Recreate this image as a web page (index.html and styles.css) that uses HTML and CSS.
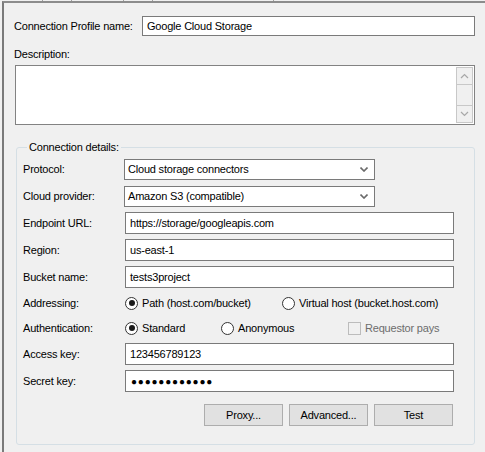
FILE: index.html
```html
<!DOCTYPE html>
<html lang="en">
<head>
    <meta charset="UTF-8">
    <title>Connection Profile</title>
    <link rel="stylesheet" href="styles.css">
</head>
<body>
    <div class="tab-ticks">
        <span class="tick t1"></span>
        <span class="tick t2"></span>
        <span class="tick t3"></span>
        <span class="tick t4"></span>
        <span class="tick t5"></span>
    </div>

    <div class="panel">
        <div class="profile-row">
            <label class="profile-label">Connection Profile name:</label>
            <div class="text-box profile-input">Google Cloud Storage</div>
        </div>

        <div class="desc-label">Description:</div>
        <div class="memo">
            <div class="memo-scroll">
                <span class="scroll-btn">
                    <svg width="9" height="6" viewBox="0 0 9 6"><path d="M1 5 L4.5 1.5 L8 5" fill="none" stroke="#a8a8a8" stroke-width="1.2"/></svg>
                </span>
                <span class="scroll-track"></span>
                <span class="scroll-btn">
                    <svg width="9" height="6" viewBox="0 0 9 6"><path d="M1 1 L4.5 4.5 L8 1" fill="none" stroke="#a8a8a8" stroke-width="1.2"/></svg>
                </span>
            </div>
        </div>

        <fieldset class="details">
            <legend>Connection details:</legend>

            <div class="row">
                <span class="row-label">Protocol:</span>
                <div class="combo">
                    <span>Cloud storage connectors</span>
                    <svg class="chevron" width="8" height="5" viewBox="0 0 8 5"><path d="M0.5 0.5 L4 4 L7.5 0.5" fill="none" stroke="#6a6a6a" stroke-width="1.6"/></svg>
                </div>
            </div>
            <div class="row">
                <span class="row-label">Cloud provider:</span>
                <div class="combo">
                    <span>Amazon S3 (compatible)</span>
                    <svg class="chevron" width="8" height="5" viewBox="0 0 8 5"><path d="M0.5 0.5 L4 4 L7.5 0.5" fill="none" stroke="#6a6a6a" stroke-width="1.6"/></svg>
                </div>
            </div>
            <div class="row">
                <span class="row-label">Endpoint URL:</span>
                <div class="text-box field">https://storage/googleapis.com</div>
            </div>
            <div class="row">
                <span class="row-label">Region:</span>
                <div class="text-box field">us-east-1</div>
            </div>
            <div class="row">
                <span class="row-label">Bucket name:</span>
                <div class="text-box field">tests3project</div>
            </div>
            <div class="row option-row">
                <span class="row-label">Addressing:</span>
                <span class="option path-opt"><span class="radio checked"></span>Path (host.com/bucket)</span>
                <span class="option"><span class="radio"></span>Virtual host (bucket.host.com)</span>
            </div>
            <div class="row option-row">
                <span class="row-label">Authentication:</span>
                <span class="option std-opt"><span class="radio checked"></span>Standard</span>
                <span class="option anon-opt"><span class="radio"></span>Anonymous</span>
                <span class="option disabled"><span class="check"></span>Requestor pays</span>
            </div>
            <div class="row">
                <span class="row-label">Access key:</span>
                <div class="text-box field">123456789123</div>
            </div>
            <div class="row secret-row">
                <span class="row-label">Secret key:</span>
                <div class="text-box field secret">&#9679;&#9679;&#9679;&#9679;&#9679;&#9679;&#9679;&#9679;&#9679;&#9679;&#9679;&#9679;</div>
            </div>

            <div class="buttons">
                <button>Proxy...</button>
                <button>Advanced...</button>
                <button>Test</button>
            </div>
        </fieldset>
    </div>
</body>
</html>
```

FILE: styles.css
```css
body {
    margin: 0;
    background-color: #f0f0f0;
    font-family: "Liberation Sans", Arial, sans-serif;
    font-size: 11px;
    letter-spacing: -0.2px;
    color: #000;
    height: 452px;
    overflow: hidden;
}

.tab-ticks {
    position: relative;
    height: 1px;
}

.tick {
    position: absolute;
    top: 0;
    width: 1px;
    height: 1px;
    background-color: #a0a0a0;
}

.t1 { left: 42px; }
.t2 { left: 71px; }
.t3 { left: 123px; }
.t4 { left: 152px; }
.t5 { left: 273px; }

.panel {
    margin-left: 2px;
    height: 451px;
    box-sizing: border-box;
    border-top: 2px solid #8c8c8c;
    border-left: 2px solid #7a7a7a;
    padding: 13px 10px 0 10px;
}

.profile-row {
    display: flex;
    align-items: center;
}

.profile-label {
    width: 128px;
}

.text-box {
    box-sizing: border-box;
    background-color: #fff;
    border: 1px solid #7a7a7a;
    padding: 0 4px;
    display: flex;
    align-items: center;
    white-space: nowrap;
}

.profile-input {
    flex: 1;
    height: 20px;
}

.desc-label {
    margin-top: 12px;
    line-height: 13px;
}

.memo {
    margin: 4px 0 0 1px;
    height: 60px;
    box-sizing: border-box;
    background-color: #fff;
    border: 1px solid #828282;
    display: flex;
    justify-content: flex-end;
    padding: 1px;
}

.memo-scroll {
    width: 17px;
    display: flex;
    flex-direction: column;
    border: 1px solid #c8c8c8;
    box-sizing: border-box;
}

.scroll-btn {
    height: 16px;
    display: flex;
    align-items: center;
    justify-content: center;
    background-color: #f0f0f0;
}

.scroll-track {
    flex: 1;
    border-top: 1px solid #c8c8c8;
    border-bottom: 1px solid #c8c8c8;
    background-color: #f0f0f0;
}

.details {
    margin: 16px 0 0 2px;
    padding: 4px 20px 18px 6px;
    border: 1px solid #d5dfe5;
    border-radius: 3px;
    min-width: 0;
}

.details legend {
    padding: 0 2px;
    margin-left: 4px;
    line-height: 13px;
}

.row {
    display: flex;
    align-items: center;
    height: 22px;
    margin-bottom: 5px;
}

.row-label {
    width: 102px;
    flex-shrink: 0;
}

.combo {
    box-sizing: border-box;
    width: 251px;
    height: 21px;
    margin-left: -1px;
    background-color: #fff;
    border: 1px solid #7a7a7a;
    display: flex;
    align-items: center;
    justify-content: space-between;
    padding: 0 6px 0 3px;
}

.field {
    flex: 1;
    height: 22px;
}

.option-row {
    height: 20px;
}

.option {
    display: flex;
    align-items: center;
    gap: 4px;
    white-space: nowrap;
}

.path-opt {
    width: 157px;
}

.std-opt {
    width: 96px;
}

.anon-opt {
    width: 127px;
}

.radio {
    box-sizing: border-box;
    width: 13px;
    height: 13px;
    border-radius: 50%;
    border: 1px solid #333;
    background-color: #fff;
    position: relative;
}

.radio.checked::after {
    content: "";
    position: absolute;
    left: 2.5px;
    top: 2.5px;
    width: 6px;
    height: 6px;
    border-radius: 50%;
    background-color: #1a1a1a;
}

.check {
    box-sizing: border-box;
    width: 13px;
    height: 13px;
    border: 1px solid #bcbcbc;
    background-color: #f0f0f0;
}

.option.disabled {
    color: #6d6d6d;
}

.secret-row {
    margin-top: 2px;
}

.secret {
    font-size: 10px;
    letter-spacing: 0.8px;
    padding-left: 5px;
}

.buttons {
    display: flex;
    justify-content: flex-end;
    gap: 6px;
    margin-top: 12px;
    padding-right: 1px;
}

button {
    width: 79px;
    height: 22px;
    background-color: #e1e1e1;
    border: 1px solid #adadad;
    border-radius: 0;
    font-family: "Liberation Sans", Arial, sans-serif;
    font-size: 11px;
    letter-spacing: -0.2px;
    color: #000;
    padding: 0;
}
```
